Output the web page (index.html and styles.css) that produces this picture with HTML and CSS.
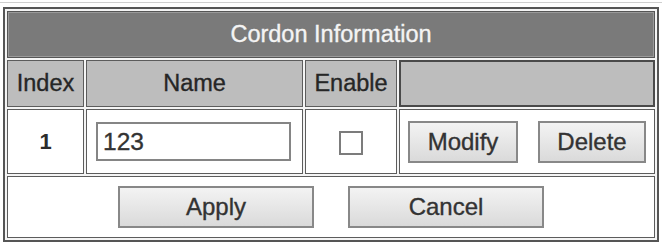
FILE: index.html
```html
<!DOCTYPE html>
<html>
<head>
<meta charset="utf-8">
<link rel="stylesheet" href="styles.css">
</head>
<body>
<div class="topline"></div>
<div class="wrap">
<table class="cordon">
  <colgroup>
    <col class="c-index">
    <col class="c-name">
    <col class="c-enable">
    <col class="c-act">
  </colgroup>
  <tr class="title-row"><td colspan="4" class="title">Cordon Information</td></tr>
  <tr class="head-row">
    <td class="head">Index</td>
    <td class="head">Name</td>
    <td class="head">Enable</td>
    <td class="head head-act"></td>
  </tr>
  <tr class="data-row">
    <td class="idx">1</td>
    <td class="name-cell"><input class="name-input" type="text" value="123"></td>
    <td class="chk-cell"><span class="chk"></span></td>
    <td class="act-cell"><div class="acts"><button class="btn btn-mod">Modify</button><button class="btn btn-del">Delete</button></div></td>
  </tr>
  <tr class="foot-row">
    <td colspan="4" class="foot"><div class="foot-btns"><button class="btn btn-wide">Apply</button><button class="btn btn-wide">Cancel</button></div></td>
  </tr>
</table>
</div>
</body>
</html>
```
FILE: styles.css
```css
html, body {
  margin: 0;
  padding: 0;
  background: #ffffff;
  font-family: "Liberation Sans", Arial, sans-serif;
}
.topline {
  height: 1px;
  margin-top: 2px;
  background: #cfcfcf;
}
.wrap {
  padding: 4px 0 0 3px;
}
.cordon {
  width: 656px;
  box-sizing: border-box;
  table-layout: fixed;
  border-collapse: separate;
  border-spacing: 2px;
  border: 2px solid #555555;
  background: #f4f4f4;
}
.c-index { width: 77px; }
.c-name { width: 217px; }
.c-enable { width: 92px; }
.c-act { width: 256px; }
.cordon td {
  box-sizing: border-box;
  padding: 0;
  border: 1px solid #5c5c5c;
  text-align: center;
  vertical-align: middle;
  font-size: 23.5px;
  color: #2c2c2c;
  -webkit-text-stroke: 0.35px currentColor;
}
.title-row td { height: 47px; }
.cordon td.title {
  background: #7a7a7a;
  color: #f4f4f4;
  border-color: #555555;
  box-shadow: inset 0 0 0 1px #9a9a9a;
}
.head-row td { height: 47px; }
.cordon td.head {
  background: #bdbdbd;
  color: #262626;
}
.cordon td.head-act {
  border: 2px solid #4a4a4a;
}
.data-row td {
  height: 65px;
  background: #ffffff;
}
.cordon td.idx {
  font-weight: bold;
  font-size: 22px;
  -webkit-text-stroke: 0;
}
.name-cell {
  text-align: left;
}
.name-input {
  display: block;
  box-sizing: border-box;
  width: 195px;
  height: 39px;
  margin: 0 0 0 9px;
  padding: 0 0 0 5px;
  border: 2px solid #858585;
  background: #ffffff;
  font-family: "Liberation Sans", Arial, sans-serif;
  font-size: 24.5px;
  color: #333333;
  -webkit-text-stroke: 0.35px #333333;
  outline: none;
}
.chk {
  display: inline-block;
  box-sizing: border-box;
  width: 24px;
  height: 24px;
  border: 2px solid #7c7c7c;
  background: #ffffff;
  vertical-align: middle;
}
.acts {
  display: flex;
  gap: 20px;
  padding-left: 8px;
}
.btn {
  box-sizing: border-box;
  height: 42px;
  padding: 0;
  border: 2px solid #888888;
  background: linear-gradient(#f3f3f3, #dadada);
  font-family: "Liberation Sans", Arial, sans-serif;
  font-size: 24px;
  color: #333333;
  -webkit-text-stroke: 0.35px #333333;
}
.btn-mod { width: 110px; }
.btn-del { width: 108px; }
.foot-row td {
  height: 62px;
  background: #ffffff;
}
.foot-btns {
  display: flex;
  justify-content: center;
  gap: 34px;
}
.btn-wide { width: 196px; }
```
